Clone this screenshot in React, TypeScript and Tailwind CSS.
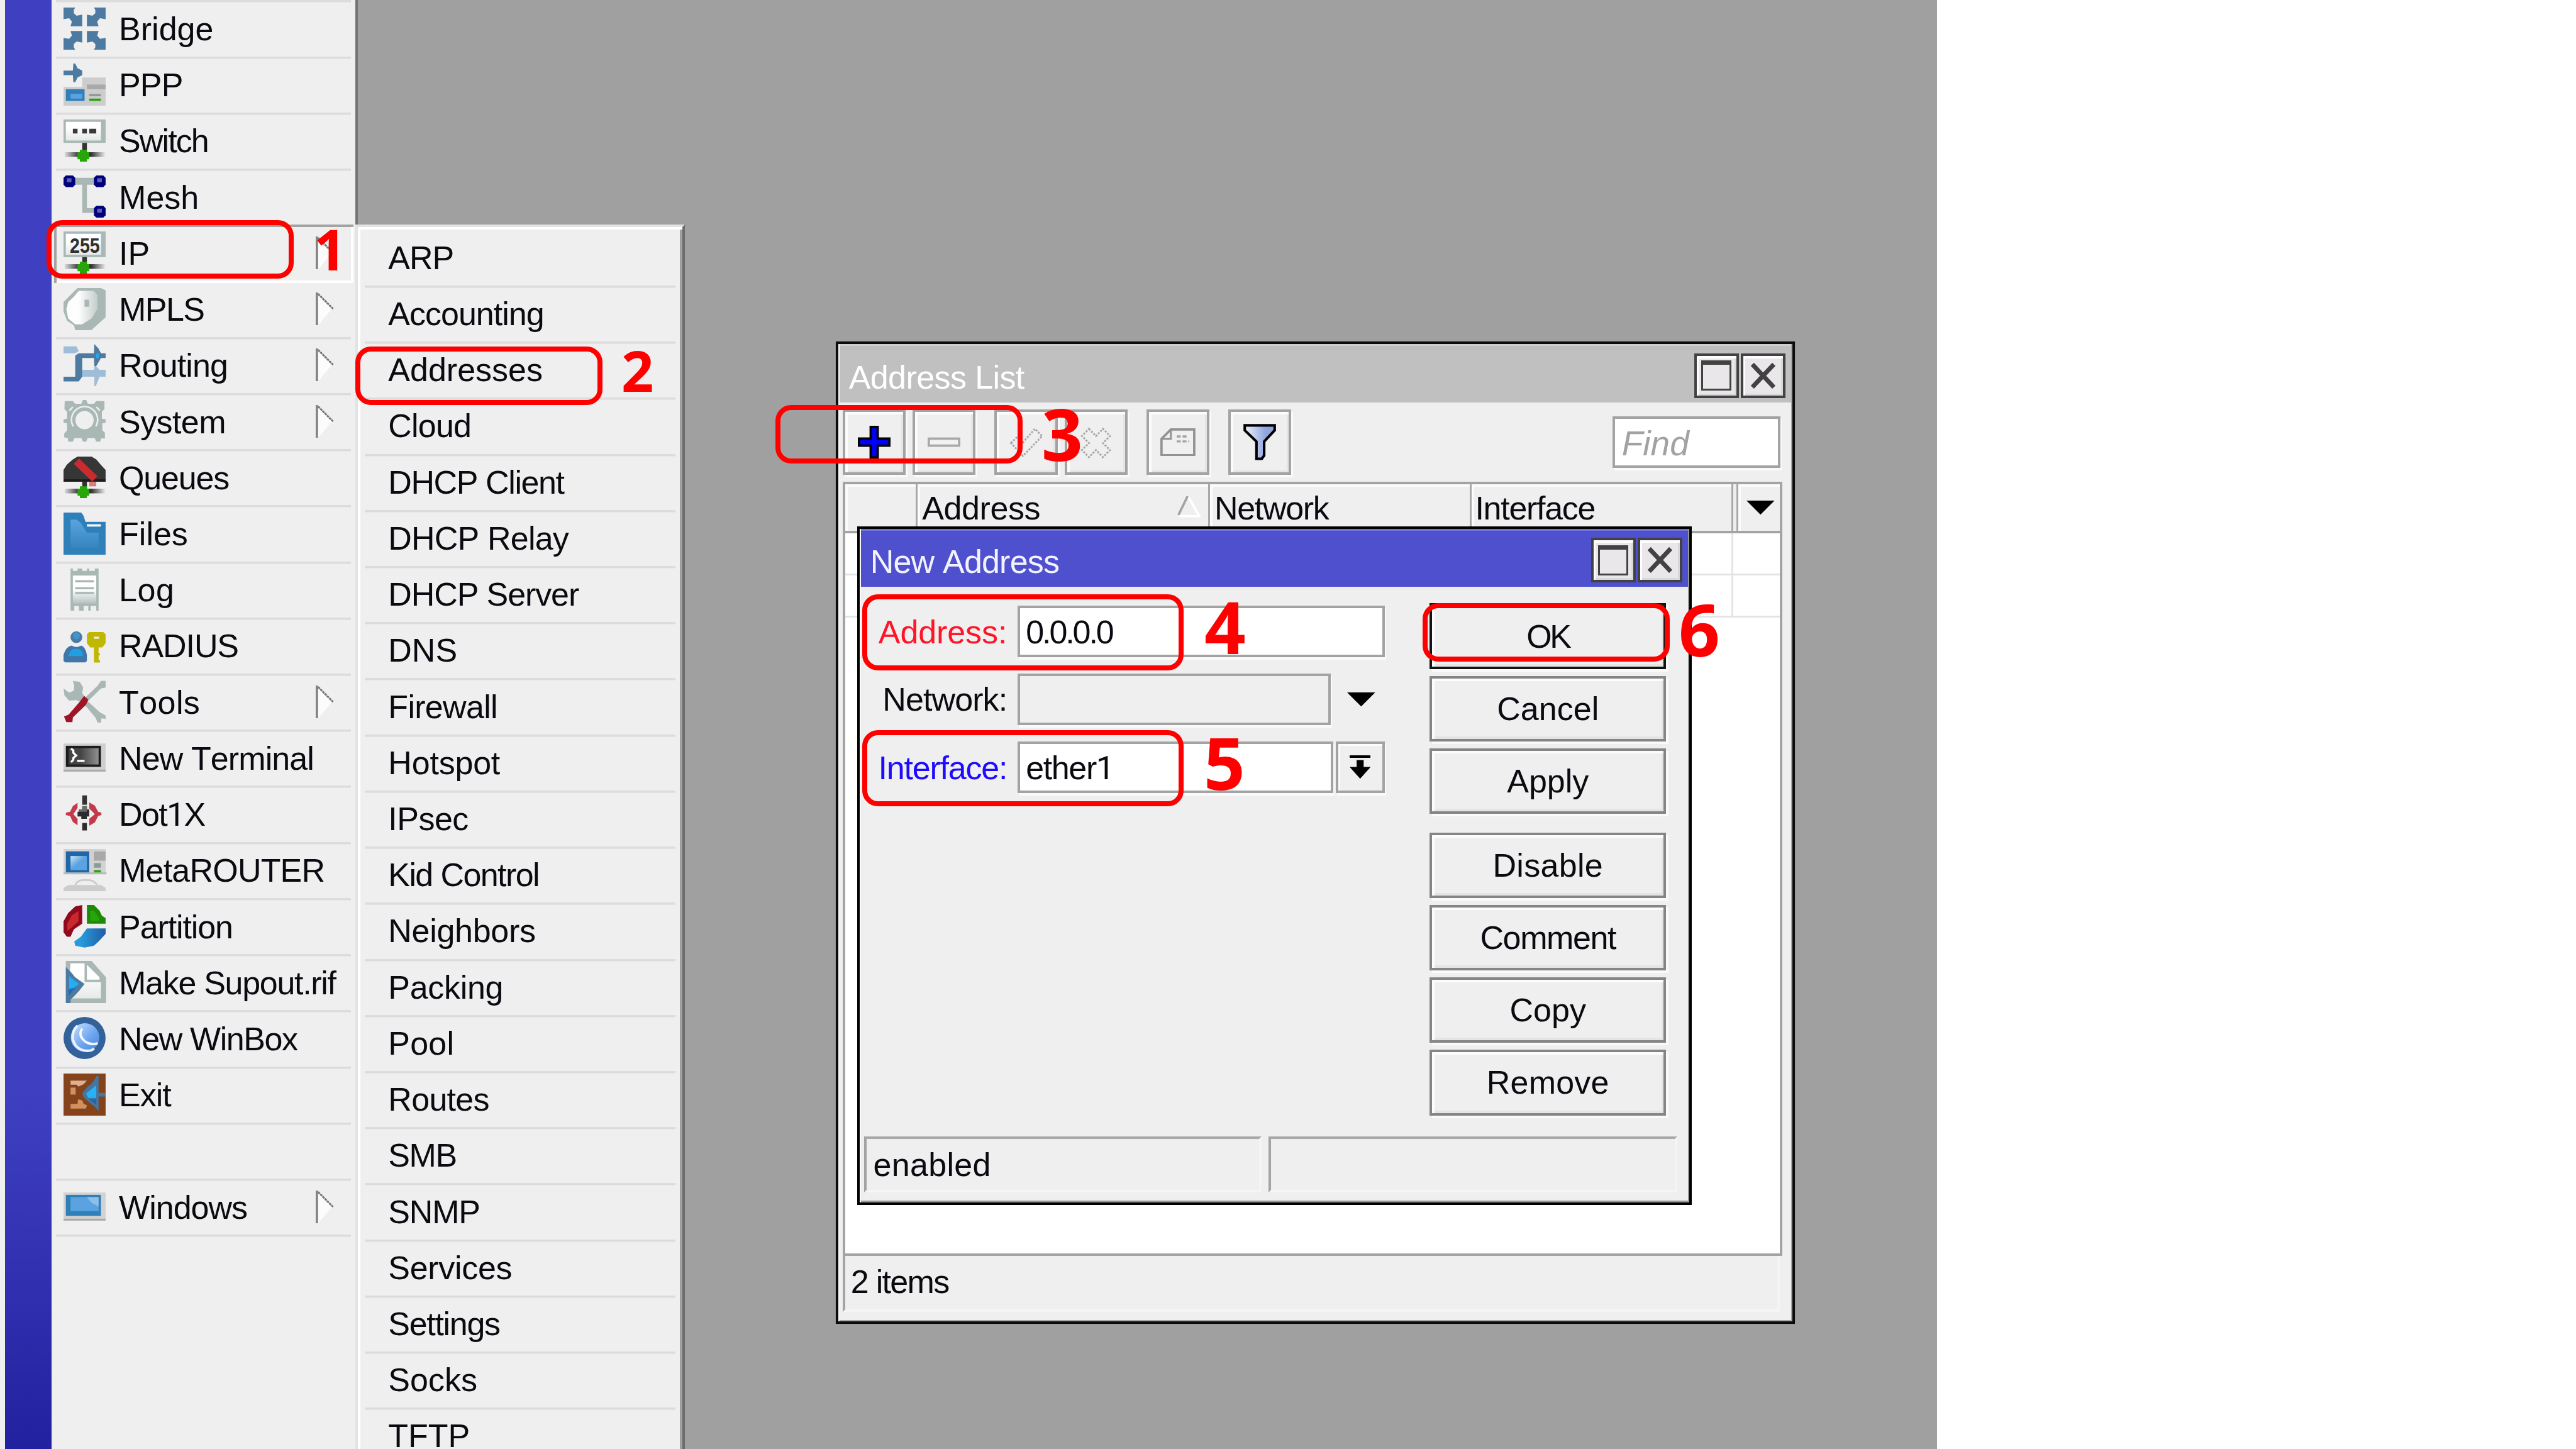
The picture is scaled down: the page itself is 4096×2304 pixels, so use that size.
import React from "react";

type IconName =
  | "bridge" | "ppp" | "switch" | "mesh" | "ip" | "mpls" | "routing" | "system"
  | "queues" | "files" | "log" | "radius" | "tools" | "terminal" | "dot1x"
  | "metarouter" | "partition" | "supout" | "winbox" | "exit" | "windows";

const STEEL = "#4c7aa0";
const SAGE = "#a9b8b5";
const GREEN = "#27a60b";

function NetBase({ top }: { top: number }) {
  return (
    <g>
      <rect x="8" y={top} width="2" height="4" fill="#333" />
      <rect x="0.5" y="14" width="17.5" height="2" fill="url(#cable)" />
      <path d="M7 13h3v1h1v3h-1v1h-3v-1h-1v-3h1z" fill={GREEN} />
    </g>
  );
}

function CornerArrow() {
  return <path d="M0 0H5L4.4 1V2.4L5.6 3.5L8 3V8H3L3.6 6L2.4 4.6L0 5Z" fill={STEEL} />;
}

function MeshNode({ x, y }: { x: number; y: number }) {
  return (
    <g transform={`translate(${x} ${y})`}>
      <path d="M1 0H4L5 1V4L4 5H1L0 4V1Z" fill="#00007c" />
      <rect x="1.4" y="1.2" width="2" height="1.7" fill="#5f5fb4" />
    </g>
  );
}

const icons: Record<IconName, React.ReactNode> = {
  bridge: (
    <g>
      <CornerArrow />
      <g transform="translate(18 0) scale(-1 1)"><CornerArrow /></g>
      <g transform="translate(0 18) scale(1 -1)"><CornerArrow /></g>
      <g transform="translate(18 18) scale(-1 -1)"><CornerArrow /></g>
    </g>
  ),
  ppp: (
    <g>
      <path d="M0 3H4L4.2 0H5L6 2L8 3V5L6 6L5 8H4.2L4 5H0Z" fill={STEEL} />
      <path d="M8 6H18V18H0V10H8Z" fill="#cdcdcd" />
      <rect x="10" y="9" width="8" height="2" fill="#a9a9a9" />
      <rect x="1" y="11" width="8" height="5" fill="#2f80b8" />
      <rect x="3" y="13" width="5" height="2" fill="#5aa3e0" />
      <rect x="11" y="13" width="5" height="1" fill="#8f9a97" />
      <rect x="11" y="15" width="5" height="1" fill={GREEN} />
    </g>
  ),
  switch: (
    <g>
      <rect width="18" height="10" fill={SAGE} />
      <rect x="1" y="1" width="15" height="8" fill="url(#paper)" />
      <path d="M4 4h2v2h-2zM8 4h2v2h-2zM11 4h3v2h-3z" fill="#3a3a3a" />
      <NetBase top={10} />
    </g>
  ),
  mesh: (
    <g>
      <path d="M4 1H14V4H10V14H14V16H8V4H4Z" fill={SAGE} />
      <MeshNode x={0} y={0} />
      <MeshNode x={13} y={0} />
      <MeshNode x={13} y={13} />
    </g>
  ),
  ip: (
    <g>
      <rect width="18" height="11" fill={SAGE} />
      <rect x="1" y="1" width="15" height="9" fill="url(#paper)" />
      <text
        x="2.7" y="9.1" fontFamily="Liberation Sans" fontWeight="bold" fontSize="8.9"
        textLength="12.8" lengthAdjust="spacingAndGlyphs" fill="#303030"
      >255</text>
      <NetBase top={11} />
    </g>
  ),
  mpls: (
    <g>
      <path d="M6 0H16L18 1V12.5L13 17L12 18H5L4.5 16L1.5 14L0 10V6L2 4Z" fill={SAGE} />
      <path d="M6.5 1.2H13L14.5 3V9L12 13L8 15.5H5L2 13L1.2 9L2 6L4.5 3.6Z" fill="url(#tag)" />
      <rect x="9" y="5" width="2" height="3" fill={SAGE} />
    </g>
  ),
  routing: (
    <g>
      <path d="M0 1H5.5L6.5 3L5 4H0Z" fill="#9fbdd9" />
      <path d="M8 11H13L13.4 9L15.4 11H18V14H15.4L13.8 18H13.2V14H8Z" fill="#9fbdd9" />
      <path d="M0 14H5V5L6.5 4H13L13.2 0L15 2L16 4H18V6H16L14 9.5H13.2L13 6H8V14L6.5 16H0Z" fill={STEEL} />
      <rect x="14" y="4" width="1.2" height="2" fill="#29a8ea" />
    </g>
  ),
  system: (
    <g>
      <path d="M0.5 0.5H4L5 1.6H7.6L8.3 0H9.7L10.4 1.6H13L14 0.5H17.5V4L16.4 5V8L18 8.3V9.7L16.6 10V13L17.7 14V16.5L16 16.4L15.7 17.8H14L13.3 16.3H10.3L9.7 17.8H8.3L7.7 16.3H4.7L4 17.8H2L1.8 16.3L0.3 16V14.4L1.5 13V10L0 9.7V8.3L1.5 8V5L0.4 4Z" fill={SAGE} />
      <path d="M4.2 11.3A5.6 5.6 0 1 1 13.8 11.3" fill="none" stroke="#eaeeed" strokeWidth="0.7" />
      <circle cx="9" cy="8.6" r="3.9" fill="#efefef" />
      <path d="M2.5 4.5L4 3M14 3L15.5 4.5" stroke="#efefef" strokeWidth="0.7" />
    </g>
  ),
  queues: (
    <g>
      <path d="M0 11V6L1.5 3.6L4 1.5L6 0.3H12L14 1.5L16 3.8L18 6V11Z" fill="#363636" />
      <rect x="0" y="10" width="18" height="1" fill="#1c1c1c" />
      <path d="M5.5 2.2L13.4 9.8" stroke="#c92b2e" strokeWidth="3.2" />
      <rect x="11" y="11" width="3" height="2" fill="#d97c7c" />
      <NetBase top={11} />
    </g>
  ),
  files: (
    <g>
      <path d="M0 0H7.6L8.6 1.4L9.4 4H18V18H0Z" fill="#2f80b8" />
      <path d="M3 3H5.6L7.5 4.6L10 8.6H15V15H3Z" fill="url(#folder)" />
      <rect x="10" y="5" width="6" height="1" fill="#f4f8fb" />
    </g>
  ),
  log: (
    <g>
      <path d="M3 0h1v1h2v-1h2v1h2v-1h1v1h2.4v-1h1.6v18h-1v-2h-2.4v2h-1v-2h-2v2h-2v-2h-2v2h-1.6z" fill={SAGE} />
      <rect x="4" y="3" width="10" height="12" fill="url(#sheet)" />
      <path d="M5 5h8v0.9h-8zM5 8h8v0.9h-8zM5 10h8v0.9h-8z" fill={SAGE} />
    </g>
  ),
  radius: (
    <g>
      <circle cx="5.5" cy="5.4" r="2.5" fill={STEEL} />
      <circle cx="5.5" cy="4.8" r="1.5" fill="#3f95cc" />
      <path d="M0 15.6V13Q1 9.4 3.4 9L5 9.6H6L7.6 9Q9.4 9.6 10 13V15.6L9.3 16.2H0.7Z" fill="#3f78a8" />
      <path d="M2 13.5Q3 10.6 4.5 10.4H6.5Q8 10.8 8.4 13.5Z" fill="#209fe2" />
      <path d="M11 3.2H17L18 4.2V8L16.6 9.8H15V12.4H15.6V13.2H15V15.2H15.6V16.3H13V9.8H11.4L10 8V4.2Z" fill="#c0b800" />
      <rect x="13" y="5.2" width="2.2" height="0.9" fill="#efefe0" />
    </g>
  ),
  tools: (
    <g>
      <path d="M16 0.2H18V3L16 3.4L10.5 8.8L9.2 7.4L14.6 2.2Z" fill={SAGE} />
      <path d="M4 0.2L7 0.6L8.4 3L8 5.4L10.5 9L15.5 13.6L18 15V16.4L16.2 16.2L16 18H14.6L13.6 15.8L8.4 9.6L5.4 8.4L2.4 8.6L0.4 6.4L0 3.4L2.4 5.2L4.4 4.4L4.6 2.2Z" fill={SAGE} />
      <path d="M8.8 6.6L10.6 8.2L9.6 10.4L4 15.8L3.8 17.8H1.2L0.2 15.4L2.2 14.6L7 9Z" fill="#a01428" />
    </g>
  ),
  terminal: (
    <g>
      <rect y="3" width="18" height="12" fill="#cfcfcf" />
      <rect y="14.2" width="18" height="0.8" fill="#a9a9a9" />
      <rect x="1" y="4" width="15" height="9" fill="#1c1c1c" />
      <rect x="2.2" y="5" width="12.8" height="7" fill="url(#screen)" />
      <path d="M3.2 5.2L4.2 6V7L5.4 8.2L4.2 9.2V10L3.2 11" fill="none" stroke="#fff" strokeWidth="0.9" />
      <rect x="5.8" y="10" width="3.2" height="0.9" fill="#fff" />
    </g>
  ),
  dot1x: (
    <g>
      <rect x="8" y="1" width="2" height="4" fill="#333" />
      <rect x="8" y="12.8" width="2" height="3.2" fill="#2c2c2c" />
      <path d="M8 5.6H10V7H11V10H10V11H7.6V10H6V8H6.6V7H8Z" fill="#2c2c2c" />
      <path d="M8 5.6H10V8H6.8V7H8Z" fill="#6a6a6a" />
      <path d="M6 4.2V6.4L4.2 9L6 11V13.8L4 12.4L2.8 9.8L1 9.4V8.4L2.8 8L4 5.6Z" fill="#c43a4c" />
      <path d="M11 4L13.4 5.4L14.8 8L16.2 8.4V9.4L14.8 9.8L13.4 12.6L11 14V11L13.4 9L11 6.6Z" fill="#c43a4c" />
    </g>
  ),
  metarouter: (
    <g>
      <rect width="18" height="10.8" fill="#d2d2d2" />
      <rect y="10" width="18.4" height="0.8" fill="#b9b9b9" />
      <rect x="1" y="1" width="10" height="9" fill="#1f66a6" />
      <rect x="3" y="3" width="7" height="6" fill="url(#glass)" />
      <rect x="13" y="1" width="5" height="4" fill="#a9a9a9" />
      <rect x="13" y="6" width="3" height="2" fill="#8f9a97" />
      <rect x="13" y="9" width="3" height="1" fill={GREEN} />
      <path d="M0 18V16.6L2 15.4H16L18 16.6V18Z" fill="#cdcdcd" />
      <path d="M5 15.4Q6 13.4 8 13.3H11Q13 13.4 14.4 15.4" fill="none" stroke="#cdcdcd" strokeWidth="0.8" />
    </g>
  ),
  partition: (
    <g>
      <path d="M8 0V8L4.4 10.4L3 13.6H1.4L0 11.6V7L2 3.4L5 0.6Z" fill="#900a1e" />
      <path d="M6.4 2.6V7L3 10L1.6 11V8L3.6 4.4Z" fill="#c9282d" />
      <path d="M10 0H13L15.4 2.4L16.4 4.6L18 5.6V8H10Z" fill="#1f8a08" />
      <path d="M11.4 2.4H13L15.2 5.4V6.8H11.4Z" fill={GREEN} />
      <path d="M10 10H18V12.4L15 15.6L13 17.4L9 18.2L5 17.4L4.6 15.6L7.4 13.6Z" fill="url(#wedge)" />
    </g>
  ),
  supout: (
    <g>
      <path d="M1 0H12L18.2 7V18H1Z" fill={SAGE} />
      <path d="M3 1H9V9H16V16H4L1.6 16.6Z" fill="url(#paper)" />
      <path d="M10 1.6L15.4 7V8H10Z" fill="#fff" />
      <path d="M1 2.6L3 4.6L5 7L9 9.8L7 12.4L5 14.6L3 16.6V18H1Z" fill={STEEL} />
      <path d="M2.4 6.5L6.6 9.8L2.4 13Z" fill="#22aef5" />
      <path d="M2.2 12L5 11.4L2.2 15Z" fill="#1f6bb8" />
    </g>
  ),
  winbox: (
    <g>
      <circle cx="9" cy="9" r="9" fill="#33629a" />
      <circle cx="9.2" cy="8.8" r="6.1" fill="url(#globe)" />
      <path d="M6 3.8Q3.6 5.6 4 9.6Q5 13.6 9 14.4Q12 14.8 13 13.4" fill="none" stroke="#e9f2ff" strokeWidth="1.1" />
      <path d="M8 5Q6 8 9.4 10.6Q11.8 12.2 14.6 11.2" fill="none" stroke="#f4f9ff" strokeWidth="1" />
    </g>
  ),
  exit: (
    <g>
      <rect width="18" height="18" fill="#84431a" />
      <path d="M3 3H10L8.6 4.6L6.4 5.6L5.6 4.8H3Z" fill="#dcb090" />
      <rect x="3" y="6" width="2.2" height="3" fill="#d09060" />
      <path d="M3 13H6L6.2 11L8 11.4L8.6 13L10 13.6L9.6 15H3Z" fill="#d09060" />
      <path d="M8 8.4L10 6L12.6 3.6L14.2 1H15V8.3H18V9.8H15V16L13.6 14.4L10.6 12L8.6 10.2Z" fill="#4576a0" />
      <path d="M9.6 8.6L14 5V10.4H10.6Z" fill="#25b2f8" />
      <path d="M11 11H14V13.4Z" fill="#1f66a6" />
    </g>
  ),
  windows: (
    <g>
      <rect y="3" width="18" height="12" fill="#d2d2d2" />
      <rect y="14.2" width="18" height="0.8" fill="#a9a9a9" />
      <rect x="1" y="4" width="15" height="9" fill="#2f80b8" />
      <rect x="3" y="5" width="12" height="6" fill="#5aa3e0" />
      <path d="M10 5H15V9L12 7.4Z" fill="#8dbfe9" />
    </g>
  ),
};

function Gradients() {
  return (
    <svg className="absolute size-0" aria-hidden="true">
      <defs>
        <linearGradient id="cable">
          <stop offset="0" stopColor="#333" stopOpacity="0.1" />
          <stop offset="0.35" stopColor="#333" />
          <stop offset="0.65" stopColor="#333" />
          <stop offset="1" stopColor="#333" stopOpacity="0" />
        </linearGradient>
        <linearGradient id="paper" x2="0" y2="1">
          <stop offset="0.3" stopColor="#fff" />
          <stop offset="1" stopColor="#e4e8e7" />
        </linearGradient>
        <linearGradient id="sheet" x2="0" y2="1">
          <stop offset="0.5" stopColor="#fff" />
          <stop offset="1" stopColor="#b4c1be" />
        </linearGradient>
        <linearGradient id="tag">
          <stop offset="0.4" stopColor="#fdfdfd" />
          <stop offset="1" stopColor="#c3cecb" />
        </linearGradient>
        <linearGradient id="folder" x2="0" y2="1">
          <stop offset="0" stopColor="#5aa3e0" />
          <stop offset="1" stopColor="#3585bf" />
        </linearGradient>
        <linearGradient id="screen">
          <stop offset="0.4" stopColor="#444" />
          <stop offset="1" stopColor="#909090" />
        </linearGradient>
        <linearGradient id="glass" x2="1" y2="1">
          <stop offset="0" stopColor="#cfe4f7" />
          <stop offset="0.5" stopColor="#5aa3e0" />
        </linearGradient>
        <linearGradient id="wedge">
          <stop offset="0.2" stopColor="#279bdc" />
          <stop offset="1" stopColor="#1f5da4" />
        </linearGradient>
        <linearGradient id="globe" x2="1" y2="1">
          <stop offset="0" stopColor="#cfe2fb" />
          <stop offset="0.6" stopColor="#69a3ef" />
          <stop offset="1" stopColor="#4a86d8" />
        </linearGradient>
        <linearGradient id="funnel">
          <stop offset="0" stopColor="#eef3ff" />
          <stop offset="0.7" stopColor="#8fa3df" />
        </linearGradient>
      </defs>
    </svg>
  );
}

interface MenuEntry {
  text?: string;
  icon?: IconName;
  sub?: boolean;
  track?: number;
}

const mainMenu: MenuEntry[] = [
  { text: "Bridge", icon: "bridge", track: 0 },
  { text: "PPP", icon: "ppp", track: -0.9 },
  { text: "Switch", icon: "switch", track: -1.9 },
  { text: "Mesh", icon: "mesh", track: 0 },
  { text: "IP", icon: "ip", sub: true, track: 0 },
  { text: "MPLS", icon: "mpls", sub: true, track: -1.6 },
  { text: "Routing", icon: "routing", sub: true, track: -0.9 },
  { text: "System", icon: "system", sub: true, track: -0.6 },
  { text: "Queues", icon: "queues", track: -1.2 },
  { text: "Files", icon: "files", track: 0 },
  { text: "Log", icon: "log", track: 0.6 },
  { text: "RADIUS", icon: "radius", track: -1.1 },
  { text: "Tools", icon: "tools", sub: true, track: 0.4 },
  { text: "New Terminal", icon: "terminal", track: -0.9 },
  { text: "Dot1X", icon: "dot1x", track: -1.7 },
  { text: "MetaROUTER", icon: "metarouter", track: -0.8 },
  { text: "Partition", icon: "partition", track: -1.1 },
  { text: "Make Supout.rif", icon: "supout", track: -1.3 },
  { text: "New WinBox", icon: "winbox", track: -1.4 },
  { text: "Exit", icon: "exit", track: -1 },
  {},
  { text: "Windows", icon: "windows", sub: true, track: -1 },
];

const ipMenu: [string, number][] = [
  ["ARP", -1], ["Accounting", -1], ["Addresses", 0], ["Cloud", -0.8],
  ["DHCP Client", -1.4], ["DHCP Relay", -0.8], ["DHCP Server", -1.1], ["DNS", 0],
  ["Firewall", -0.7], ["Hotspot", -0.2], ["IPsec", -0.5], ["Kid Control", -1.6],
  ["Neighbors", -0.3], ["Packing", -0.3], ["Pool", 0.2], ["Routes", -0.7], ["SMB", -1.4],
  ["SNMP", -1.2], ["Services", -0.3], ["Settings", -1.3], ["Socks", 0], ["TFTP", 0],
];

/* The digit 1 is set in Roboto, whose figure has no foot. */
function Label({ text, track = 0 }: { text: string; track?: number }) {
  const parts = text.split("1");
  return (
    <span className="whitespace-pre" style={{ letterSpacing: `${track}px` }}>
      {parts.map((part, i) => (
        <React.Fragment key={i}>
          {i > 0 && <span className="font-['Roboto',sans-serif] leading-[0]">1</span>}
          {part}
        </React.Fragment>
      ))}
    </span>
  );
}

function SubArrow() {
  return (
    <svg viewBox="0 0 8 14" className="ml-auto mr-[26px] h-14 w-8 shrink-0">
      <path d="M1 1L7 7L1 14Z" fill="#fcfcfc" />
      <rect width="1" height="14" fill="#848484" />
      <path d="M1 0.6L7.4 7" stroke="#777" strokeWidth="0.8" strokeDasharray="1.1 0.25" />
    </svg>
  );
}

function MainMenu() {
  return (
    <nav className="w-130 bg-[#efefef] pl-2 pt-[0.4px]">
      {mainMenu.map((entry, i) => {
        const pressed = entry.text === "IP";
        const shape = pressed
          ? "relative -ml-1 h-25 w-128 -mb-1 pl-4 pr-1 pb-1 shadow-[inset_4px_4px_#a3a3a3,inset_-4px_-4px_#ffffff]"
          : entry.text === "MPLS"
            ? "h-24 w-126 pl-3"
            : "h-24 w-126 pl-3 shadow-[inset_0_3.5px_#dcdcdc]";
        return (
          <div key={i} className={`flex items-center ${shape}`}>
            {entry.icon && (
              <svg viewBox="0 0 18 18" className="mr-[21.6px] size-18 shrink-0 overflow-visible">{icons[entry.icon]}</svg>
            )}
            {entry.text && (
              <span className="pt-[2px]"><Label text={entry.text} track={entry.track} /></span>
            )}
            {entry.sub && <SubArrow />}
          </div>
        );
      })}
      <div className="h-1 w-126 shadow-[inset_0_3.5px_#dcdcdc]" />
    </nav>
  );
}

function IpMenu() {
  return (
    <nav className="absolute left-[565px] top-[357px] h-[1960px] w-141 border-4 border-b-0 border-l-[#e3e3e3] border-r-[#6c6c6c] border-t-[#e3e3e3] bg-[#efefef] px-3 pt-1 shadow-[inset_4px_4px_#ffffff,inset_-4px_0_#a0a0a0]">
      {ipMenu.map(([text, track], i) => (
        <div
          key={text}
          className={`flex h-24 items-center pl-10 pt-[1px] ${i > 0 ? "shadow-[inset_0_3.5px_#dcdcdc]" : ""}`}
        >
          <Label text={text} track={track} />
        </div>
      ))}
    </nav>
  );
}

function CaptionButton({ kind }: { kind: "max" | "close" }) {
  return (
    <div className="flex size-19 items-center justify-center border-4 border-[#424242] bg-[#eae7ea] shadow-[inset_3px_4px_#fdfdfd,inset_-3px_-3px_#d8d8d8]">
      {kind === "max" ? (
        <div className="size-13 border-[3.7px] border-t-[7.4px] border-[#424242]" />
      ) : (
        <svg viewBox="0 0 11 11" className="size-11">
          <path d="M0.9 0.6L10.1 10.4M10.1 0.6L0.9 10.4" stroke="#424242" strokeWidth="1.9" />
        </svg>
      )}
    </div>
  );
}

function TitleBar({ text, track, tone }: { text: string; track: number; tone: string }) {
  return (
    <div className={`flex h-25 shrink-0 pl-4.5 pr-3 pt-4 ${tone}`}>
      <span className="leading-[76px]"><Label text={text} track={track} /></span>
      <div className="ml-auto flex gap-1">
        <CaptionButton kind="max" />
        <CaptionButton kind="close" />
      </div>
    </div>
  );
}

function ToolButton({ children, className = "" }: { children: React.ReactNode; className?: string }) {
  return (
    <div className={`flex h-28 w-27 items-center justify-center border-4 border-[#a3a3a3] bg-[#efefef] shadow-[inset_4px_4px_#fcfcfc,inset_-3px_-3px_#e4e4e4,3px_4px_#fafafa] ${className}`}>
      {children}
    </div>
  );
}

function Toolbar() {
  return (
    <div className="flex h-34 shrink-0 items-start pl-[6.5px] pr-5 pt-3">
      <ToolButton>
        <svg viewBox="0 0 14 14" className="size-14">
          <path d="M5.5 0.5H8.5V5.5H13.5V8.5H8.5V13.5H5.5V8.5H0.5V5.5H5.5Z" fill="#0000fa" stroke="#000" />
        </svg>
      </ToolButton>
      <ToolButton className="ml-3">
        <svg viewBox="0 0 14 14" className="size-14">
          <rect x="0.5" y="5.5" width="13" height="3" fill="#f2f2f2" stroke="#a8a8a8" />
        </svg>
      </ToolButton>
      <ToolButton className="ml-8">
        <svg viewBox="0 0 14 14" className="size-14 overflow-visible">
          <path d="M0.7 7.4L3.3 4.8L5.8 7.2L10.9 1.3L14 4.4L5.8 12.9Z" fill="none" stroke="#a6a6a6" strokeWidth="0.8" strokeDasharray="0.8 0.61" />
        </svg>
      </ToolButton>
      <ToolButton className="ml-3">
        <svg viewBox="0 0 14 14" className="size-14 overflow-visible">
          <path d="M3.9 1.3L6.9 4.4L9.9 1.3L12.9 4.4L9.9 7.4L12.9 10.4L9.9 13.4L6.9 10.4L3.9 13.4L0.9 10.4L3.9 7.4L0.9 4.4Z" fill="none" stroke="#a6a6a6" strokeWidth="0.8" strokeDasharray="0.8 0.61" />
        </svg>
      </ToolButton>
      <ToolButton className="ml-8">
        <svg viewBox="0 0 15 12" className="h-12 w-15">
          <path d="M4.5 0.5H14.5V11.5H0.5V4.5Z" fill="#f0f0f0" stroke="#939393" />
          <path d="M0.5 4.5H4.5V0.5" fill="none" stroke="#939393" strokeWidth="0.8" />
          <path d="M7 3.5H11.4M7 5.6H12.4" stroke="#a3a3a3" strokeWidth="0.9" strokeDasharray="1.7 0.8" />
        </svg>
      </ToolButton>
      <ToolButton className="ml-8">
        <svg viewBox="0 0 14 16" className="h-16 w-14">
          <path d="M0.6 0.9H13.4V3L8.9 7.8V13.8L7.9 15.2H5.6V7.8L0.6 3Z" fill="url(#funnel)" stroke="#000" strokeWidth="1.1" />
        </svg>
      </ToolButton>
      <div className="ml-auto mt-3 h-22 w-72 border-4 border-[#a3a3a3] bg-white pl-[11px] text-[55px] italic leading-[79px] text-[#a2a2a2] shadow-[2px_4px_#fafafa]">
        Find
      </div>
    </div>
  );
}

function DownArrow() {
  return (
    <svg viewBox="0 0 12 6" className="h-6 w-12">
      <path d="M0 0H12L6 6Z" fill="#000" />
    </svg>
  );
}

const headCell = "flex items-center border-r-[3.7px] border-[#a8a8a8] pt-[1px] shadow-[inset_4px_4px_#fbfbfb]";

function AddressListWindow() {
  return (
    <section className="absolute left-[1329px] top-[543px] flex h-[1562px] w-[1525px] flex-col border-4 border-[#0c0c0c] bg-[#efefef] shadow-[0_0_1px_#555]">
      <TitleBar text="Address List" track={-0.6} tone="bg-[#c0c0c0] text-white shadow-[inset_0_3px_#cfcfcf]" />
      <Toolbar />
      <div className="ml-[6.5px] flex h-331 w-402 shrink-0 flex-col border-4 border-[#a3a3a3] bg-white">
        <div className="flex h-21 shrink-0 border-b-4 border-[#a3a3a3] bg-[#efefef]">
          <div className={`w-31 ${headCell}`} />
          <div className={`w-125 pl-2 ${headCell}`}>
            <Label text="Address" track={-0.4} />
            <svg viewBox="0 0 10 9" className="mb-1 ml-auto mr-3 h-9 w-10">
              <path d="M4.8 0.4L9.4 8.5H0.8" fill="none" stroke="#fff" strokeWidth="1" />
              <path d="M4.4 0L0.5 8" fill="none" stroke="#a3a3a3" strokeWidth="1" />
            </svg>
          </div>
          <div className={`w-112 pl-2 ${headCell}`}><Label text="Network" track={-1.3} /></div>
          <div className={`w-112 pl-1.5 ${headCell}`}><Label text="Interface" track={-1.3} /></div>
          <div className="w-2 border-r-[3.7px] border-[#a8a8a8]" />
          <div className="flex flex-1 items-center justify-center pl-[5px] shadow-[inset_4px_4px_#fbfbfb]"><DownArrow /></div>
        </div>
        {[0, 1].map((row) => (
          <div key={row} className="flex h-18 shrink-0 border-b-[3.5px] border-[#e4e4e4]">
            <div className="w-380 border-r-[3.5px] border-[#e4e4e4]" />
          </div>
        ))}
      </div>
      <div className="ml-[6.5px] flex h-24 w-401 items-center border-b-4 border-l-4 border-r-4 border-b-[#f5f5f5] border-l-[#a3a3a3] border-r-[#f4f4f4] pb-[3px] pl-2.5">
        <Label text="2 items" track={-1.7} />
      </div>
      <div className="flex-1" />
      <div className="absolute inset-0 shadow-[inset_2px_0_#f8f8f8,inset_-2px_-2px_#a8a8a8]" />
    </section>
  );
}

const input = "h-22 border-4 border-[#a3a3a3] pl-2.5 leading-[76px] shadow-[2px_4px_#fafafa]";
const fieldLabel = "w-[251px] pr-4.5 text-right leading-[84px]";

function PushButton({ text, track = 0, className = "border-[#858585]" }: { text: string; track?: number; className?: string }) {
  return (
    <div className={`flex h-28 w-101 items-center justify-center border-4 bg-[#efefef] pl-[1px] shadow-[inset_4px_4px_#fcfcfc,inset_-3px_-4px_#e4e4e4,4px_4px_#fafafa] ${className}`}>
      <Label text={text} track={track} />
    </div>
  );
}

function NewAddressDialog() {
  return (
    <section className="absolute left-[1363px] top-[836.5px] flex h-[1079px] w-[1327px] flex-col border-4 border-black bg-[#efefef]">
      <TitleBar text="New Address" track={-0.8} tone="bg-[#4e50ce] text-[#f2f2ff] shadow-[inset_0_3px_#7173dc]" />
      <div className="flex h-235 shrink-0">
        <div className="flex w-[906px] flex-col gap-7 pt-8">
          <div className="flex h-22">
            <div className={`text-[#ff1428] ${fieldLabel}`}><Label text="Address:" track={-0.1} /></div>
            <div className={`w-157 bg-white ${input}`}><Label text="0.0.0.0" track={-3.1} /></div>
          </div>
          <div className="flex h-22 items-center">
            <div className={fieldLabel}><Label text="Network:" track={-0.9} /></div>
            <div className={`w-134 ${input}`} />
            <div className="ml-7"><DownArrow /></div>
          </div>
          <div className="flex h-22">
            <div className={`text-[#1e0aff] ${fieldLabel}`}><Label text="Interface:" track={-1.2} /></div>
            <div className={`w-135 bg-white ${input}`}><Label text="ether1" track={-1.4} /></div>
            <div className="ml-1 flex h-22 w-21 items-center justify-center border-4 border-[#a3a3a3] bg-[#efefef] shadow-[inset_3px_3px_#fcfcfc,2px_4px_#fafafa]">
              <svg viewBox="0 0 9 10" className="h-10 w-9">
                <path d="M0 0H9V1.1H0ZM3 2H6V5H9L4.5 10L0 5H3Z" fill="#000" />
              </svg>
            </div>
          </div>
        </div>
        <div className="flex flex-col gap-3 pt-7">
          <PushButton text="OK" track={-3.5} className="border-[#141414]" />
          <PushButton text="Cancel" />
          <PushButton text="Apply" />
          <PushButton text="Disable" track={0.3} className="mt-5 border-[#858585]" />
          <PushButton text="Comment" track={-1.4} />
          <PushButton text="Copy" />
          <PushButton text="Remove" track={0.2} />
        </div>
      </div>
      <div className="flex h-24 shrink-0 gap-3 pl-[6.5px]">
        <div className="flex w-170 items-center border-4 border-b-[#f5f5f5] border-l-[#a3a3a3] border-r-[#f4f4f4] border-t-[#a8a8a8] pl-[11px] pt-[1px]">
          <Label text="enabled" track={0.3} />
        </div>
        <div className="w-175 border-4 border-b-[#f5f5f5] border-l-[#a3a3a3] border-r-[#f4f4f4] border-t-[#a8a8a8]" />
      </div>
      <div className="absolute inset-0 shadow-[inset_2px_0_#f8f8f8,inset_-2px_-3px_#999999]" />
    </section>
  );
}

function Callouts() {
  const box = "absolute rounded-[25px] border-[8.3px] border-[#ff0000]";
  const small = `${box} h-[93px] w-[393px]`;
  const large = `${box} h-[121px] w-[511px]`;
  const digit = "absolute font-['Open_Sans',sans-serif] font-bold leading-none text-[#ff0000]";
  return (
    <div>
      <div className={`${small} left-[74px] top-[350px]`} />
      <div className={`${small} left-[565px] top-[551px]`} />
      <div className={`${small} left-[1233px] top-[644px]`} />
      <div className={`${large} left-[1371px] top-[945px]`} />
      <div className={`${large} left-[1371px] top-[1161px]`} />
      <div className={`${small} left-[2262px] top-[959px]`} />
      <span className={`${digit} left-[499px] top-[350px] text-[90px]`}>1</span>
      <span className={`${digit} left-[988px] top-[543px] text-[90px]`}>2</span>
      <span className={`${digit} left-[1656px] top-[631px] text-[115px]`}>3</span>
      <span className={`${digit} left-[1915px] top-[938px] text-[115px]`}>4</span>
      <span className={`${digit} left-[1914px] top-[1154px] text-[115px]`}>5</span>
      <span className={`${digit} left-[2669px] top-[942px] text-[115px]`}>6</span>
    </div>
  );
}

export default function App() {
  return (
    <div className="relative h-[2304px] w-[4096px] overflow-hidden bg-white font-['Liberation_Sans',Arial,sans-serif] text-[52px] leading-none text-[#0a0a10] [--spacing:3.718px] [font-kerning:none]">
      <Gradients />
      <div className="flex h-full">
        <div className="w-[8px] bg-[#efefef]" />
        <div className="w-[74px] bg-[linear-gradient(#3f3fc2_0,#3f3fc2_1740px,#2222a0_2304px)]" />
        <MainMenu />
        <div className="w-[2515px] bg-[#a0a0a0] shadow-[inset_4px_0_#757575]" />
      </div>
      <IpMenu />
      <AddressListWindow />
      <NewAddressDialog />
      <Callouts />
    </div>
  );
}
